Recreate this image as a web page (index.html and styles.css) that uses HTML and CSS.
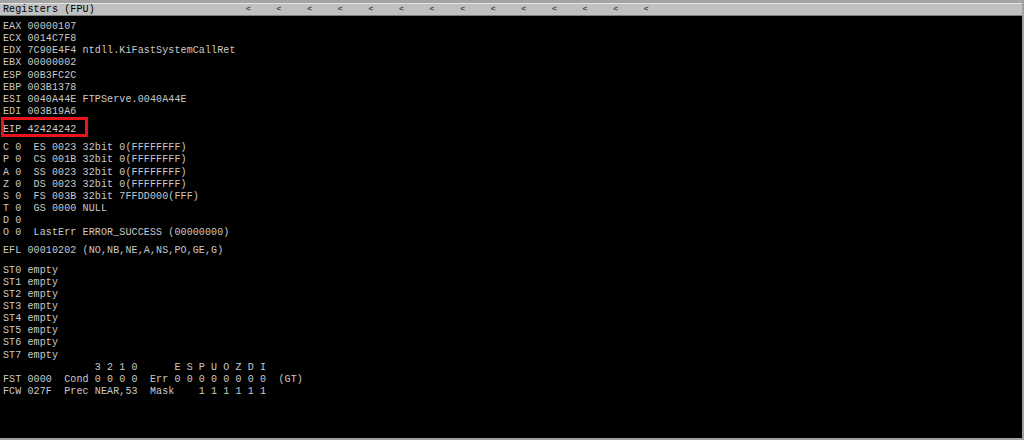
FILE: index.html
```html
<!DOCTYPE html>
<html lang="en">
<head>
    <meta charset="UTF-8">
    <title>Registers (FPU)</title>
    <link rel="stylesheet" href="styles.css">
</head>
<body>
    <div class="pane">
        <div class="titlebar">
            <span class="title">Registers (FPU)</span>
            <div class="arrows">
                <span>&lt;</span><span>&lt;</span><span>&lt;</span><span>&lt;</span>
                <span>&lt;</span><span>&lt;</span><span>&lt;</span><span>&lt;</span>
                <span>&lt;</span><span>&lt;</span><span>&lt;</span><span>&lt;</span>
                <span>&lt;</span><span>&lt;</span>
            </div>
        </div>

        <div class="regs">
            <!-- general registers -->
            <div class="grp">
                <div class="row">EAX 00000107</div>
                <div class="row">ECX 0014C7F8</div>
                <div class="row">EDX 7C90E4F4 ntdll.KiFastSystemCallRet</div>
                <div class="row">EBX 00000002</div>
                <div class="row">ESP 00B3FC2C</div>
                <div class="row">EBP 003B1378</div>
                <div class="row">ESI 0040A44E FTPServe.0040A44E</div>
                <div class="row">EDI 003B19A6</div>
            </div>

            <div class="grp">
                <div class="row marked">EIP 42424242</div>
            </div>

            <!-- flags + segments -->
            <div class="grp">
                <div class="row">C 0  ES 0023 32bit 0(FFFFFFFF)</div>
                <div class="row">P 0  CS 001B 32bit 0(FFFFFFFF)</div>
                <div class="row">A 0  SS 0023 32bit 0(FFFFFFFF)</div>
                <div class="row">Z 0  DS 0023 32bit 0(FFFFFFFF)</div>
                <div class="row">S 0  FS 003B 32bit 7FFDD000(FFF)</div>
                <div class="row">T 0  GS 0000 NULL</div>
                <div class="row">D 0</div>
                <div class="row">O 0  LastErr ERROR_SUCCESS (00000000)</div>
            </div>

            <div class="grp">
                <div class="row">EFL 00010202 (NO,NB,NE,A,NS,PO,GE,G)</div>
            </div>

            <!-- fpu stack -->
            <div class="grp grp-fpu">
                <div class="row">ST0 empty</div>
                <div class="row">ST1 empty</div>
                <div class="row">ST2 empty</div>
                <div class="row">ST3 empty</div>
                <div class="row">ST4 empty</div>
                <div class="row">ST5 empty</div>
                <div class="row">ST6 empty</div>
                <div class="row">ST7 empty</div>
                <div class="row">               3 2 1 0      E S P U O Z D I</div>
                <div class="row">FST 0000  Cond 0 0 0 0  Err 0 0 0 0 0 0 0 0  (GT)</div>
                <div class="row">FCW 027F  Prec NEAR,53  Mask    1 1 1 1 1 1</div>
            </div>
        </div>
    </div>
</body>
</html>
```

FILE: styles.css
```css
/* base */
body, html {
    margin: 0;
    padding: 0;
    background: #000;
    font-family: "Courier New", "Liberation Mono", monospace;
}

/* whole register pane */
.pane {
    width: 1024px;
    height: 440px;
    box-sizing: border-box;
    border-right: 2px solid #a0a0a0;
    border-bottom: 2px solid #a0a0a0;
    background: #000;
    overflow: hidden;
}

/* grey title strip */
.titlebar {
    display: flex;
    align-items: center;
    height: 12px;
    padding-left: 3px;
    background: #c0c0c0;
    border-top: 3px solid #a4a4a4;
    border-bottom: 1px solid #7c7c7c;
    box-shadow: inset 0 1px 0 #e4e4e4;
    font-size: 10px;
    letter-spacing: 0.12px;
    color: #000;
}

.title {
    width: 243px;
    flex-shrink: 0;
    white-space: pre;
    line-height: 12px;
    padding-top: 1px;
}

.arrows {
    display: flex;
}

.arrows span {
    width: 30.6px;
    font-size: 8px;
    font-weight: bold;
    color: #484848;
    line-height: 12px;
}

/* register text */
.regs {
    padding: 5px 0 0 3px;
    font-size: 10px;
    letter-spacing: 0.12px;
    color: #cacaca;
}

.grp + .grp {
    margin-top: 6px;
}

.grp.grp-fpu {
    margin-top: 7px;
}

.row {
    white-space: pre;
    line-height: 12.15px;
    height: 12.15px;
}

/* red highlight round EIP */
.marked {
    position: relative;
}

.marked::after {
    content: "";
    position: absolute;
    left: -2px;
    top: -7px;
    width: 81px;
    height: 14px;
    border: 3px solid #e8141c;
}
```
